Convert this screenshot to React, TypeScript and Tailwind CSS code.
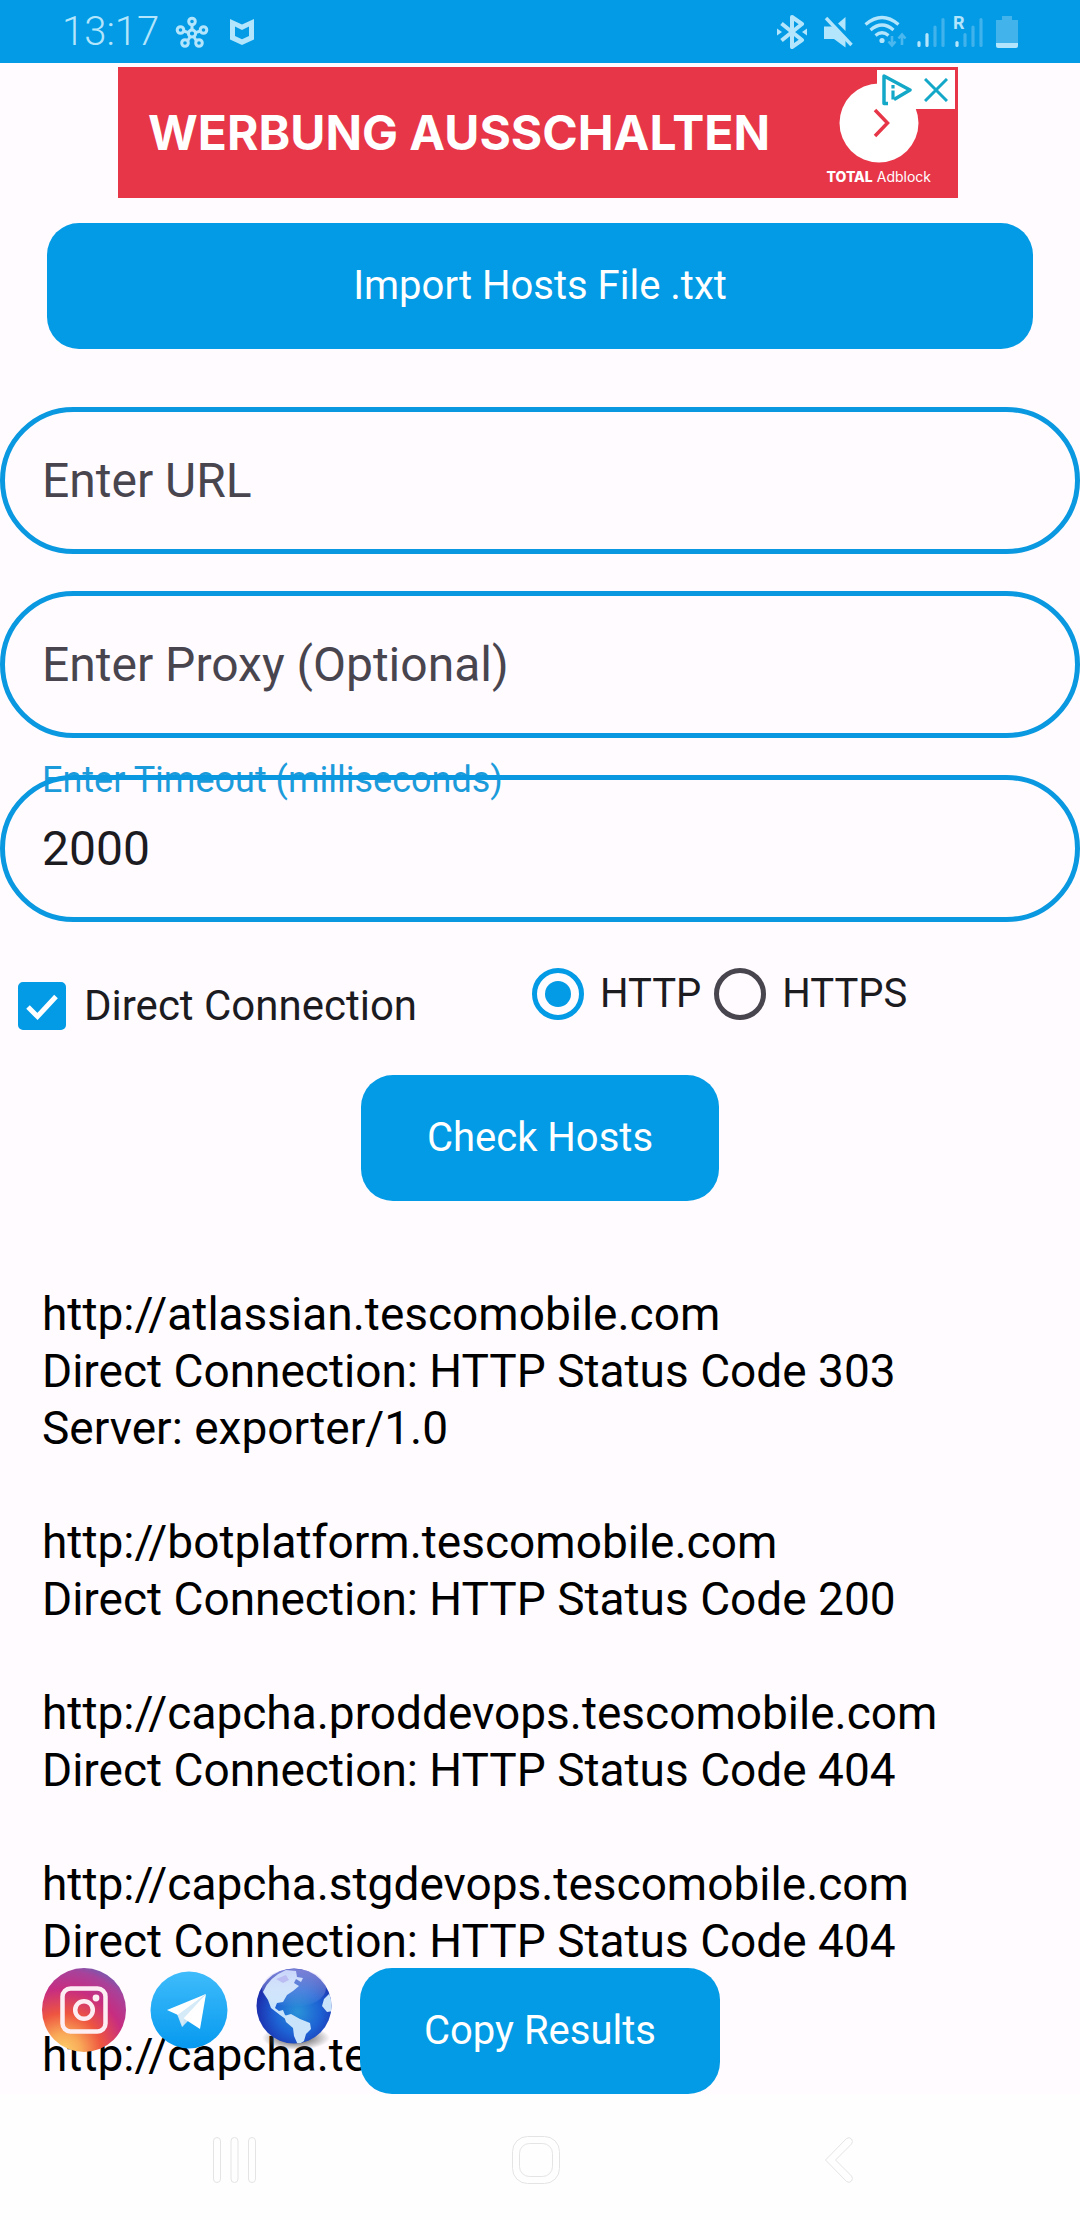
import { useState } from "react";

const RESULTS = [
  { url: "http://atlassian.tescomobile.com", status: 303, server: "exporter/1.0" },
  { url: "http://botplatform.tescomobile.com", status: 200 },
  { url: "http://capcha.proddevops.tescomobile.com", status: 404 },
  { url: "http://capcha.stgdevops.tescomobile.com", status: 404 },
];

const FIELD = "block w-full h-[147px] rounded-full border-5 border-[#0a99e0] bg-transparent px-[37px] text-[48px] text-[#1c1b1f] outline-none placeholder:text-[#49454f] placeholder:opacity-100";
const BUTTON = "h-[126px] rounded-[32px] bg-[#039be5] text-[40px] text-white";

function StatusBar() {
  return (
    <header className="flex h-[63px] items-center bg-[#039be5] pl-[62px] pr-[62px] text-[#b3e5fc]">
      <span className="text-[40px] font-light leading-none">13:17</span>
      <svg className="ml-[16px]" width="34" height="34" viewBox="0 0 34 34" fill="none" stroke="currentColor" strokeWidth="3">
        <path d="M17 10v4M8.500 16l5 1.600M25.500 16l-5 1.600M12.500 26l2.500-4M21.500 26l-2.500-4" />
        <circle cx="17" cy="18.500" r="3.600" />
        <circle cx="17" cy="6.500" r="3.300" />
        <circle cx="5.500" cy="15" r="3.300" />
        <circle cx="28.500" cy="15" r="3.300" />
        <circle cx="10" cy="28" r="3.300" />
        <circle cx="24" cy="28" r="3.300" />
      </svg>
      <svg className="ml-[21px]" width="24" height="28" viewBox="0 0 24 28" fill="currentColor">
        <path fillRule="evenodd" d="M0 1l12 5.500L24 1v20.500L12 27 0 21.500zM5 8.500v9.500l7 3.300 7-3.300V8.500l-7 3.500z" />
      </svg>
      <div className="ml-auto flex items-center">
        <svg width="30" height="34" viewBox="0 0 30 34" fill="none" stroke="currentColor" strokeWidth="4">
          <path d="M4.500 8.500L25 25l-10 7V2l10 7L4.500 25.500" strokeLinejoin="round" />
          <path d="M0 13.500l5 3.500-5 3.500zM30 13.500L25 17l5 3.500z" fill="currentColor" stroke="none" />
        </svg>
        <svg className="ml-[17px]" width="30" height="34" viewBox="0 0 30 34" fill="currentColor">
          <path d="M21.500 2v14L14 8.500z" />
          <path d="M2 3l25.500 27" stroke="#039be5" strokeWidth="7" />
          <path d="M0 11.500h9l12.500 12v9L10 24H0z" />
          <path d="M2 3l25.500 27" stroke="currentColor" strokeWidth="3.400" />
        </svg>
        <svg className="ml-[10px]" width="44" height="34" viewBox="0 0 44 34" fill="none" stroke="currentColor" strokeWidth="3.200">
          <path d="M1.500 9.500q16.500-14 33 0M6.500 15q11.500-10 23 0M11.500 20.500q6.500-5.500 13 0" />
          <circle cx="18" cy="25.500" r="2.600" fill="currentColor" stroke="none" />
          <path d="M28 21v9M24.500 26.500L28 30.500l3.500-4M38 30v-9M34.500 23.500L38 19.500l3.500 4" stroke="#4ab8ee" strokeWidth="2.600" />
        </svg>
        <svg className="ml-[9px]" width="28" height="34" viewBox="0 0 28 34" strokeLinecap="round" strokeWidth="3.200" fill="none">
          <path d="M2 27.500v3M10 19.500v11" stroke="currentColor" />
          <path d="M18 12v18.500M26 4.500v26" stroke="#40b3ec" />
        </svg>
        <svg className="ml-[7px] overflow-visible" width="32" height="34" viewBox="0 0 32 34" strokeLinecap="round" strokeWidth="3.200" fill="none">
          <text x="1" y="14" fontSize="18" fontWeight="700" fill="currentColor">R</text>
          <path d="M5 27.500v3" stroke="currentColor" />
          <path d="M13 19.500v11M21 12v18.500M29 4.500v26" stroke="#40b3ec" />
        </svg>
        <svg className="ml-[12px]" width="22" height="34" viewBox="0 0 22 34">
          <path d="M6 1h10v4h6v24H0V5h6z" fill="#42b3eb" />
          <path d="M0 28h22v3q0 2-2 2H2q-2 0-2-2z" fill="currentColor" />
        </svg>
      </div>
    </header>
  );
}

function AdBanner() {
  return (
    <a href="#ad" className="relative ml-[118px] mr-[122px] mt-1 flex h-[131px] items-center justify-between bg-[#e73648] pl-[30px] pr-[27px] font-['Inter',sans-serif] text-white">
      <span className="text-[48px] font-bold">WERBUNG AUSSCHALTEN</span>
      <span className="flex flex-col items-center pt-[4px]">
        <svg width="80" height="80" viewBox="0 0 80 80">
          <circle cx="40" cy="40" r="39.500" fill="#fff" />
          <path d="M36 27l12.500 13L36 53" fill="none" stroke="#e73648" strokeWidth="3.500" />
        </svg>
        <span className="mt-[4px] text-[14px] leading-[20px]"><b className="font-extrabold">TOTAL</b> Adblock</span>
      </span>
      <span className="absolute right-[3px] top-[3px] flex h-[39px] w-[78px] items-center justify-between bg-white pl-[5px] pr-[7px]">
        <svg width="30" height="32" viewBox="0 0 30 32" fill="none" stroke="#14a8c8" strokeWidth="3.500" strokeLinejoin="round">
          <path d="M6 29.500H2V2l26 14-16 9.500" />
          <path d="M11 16.500v9M11 11v3.500" strokeWidth="3.200" />
        </svg>
        <svg width="24" height="24" viewBox="0 0 24 24" stroke="#14a8c8" strokeWidth="3">
          <path d="M1 1l22 22M23 1L1 23" />
        </svg>
      </span>
    </a>
  );
}

function InstagramIcon() {
  return (
    <svg width="84" height="84" viewBox="0 0 84 84" fill="none">
      <defs>
        <radialGradient id="ig" cx="0.25" cy="1" r="1.1">
          <stop offset="0" stopColor="#fdd36b" />
          <stop offset="0.2" stopColor="#f9a858" />
          <stop offset="0.42" stopColor="#ee5540" />
          <stop offset="0.68" stopColor="#c72d80" />
          <stop offset="0.88" stopColor="#a8429a" />
          <stop offset="1" stopColor="#6c5fb5" />
        </radialGradient>
      </defs>
      <circle cx="42" cy="42" r="42" fill="url(#ig)" />
      <rect x="20.500" y="20.500" width="43" height="43" rx="8" stroke="#fdeef3" strokeWidth="4.500" />
      <circle cx="42" cy="42" r="8.800" stroke="#fdeef3" strokeWidth="4.500" />
      <circle cx="54" cy="30" r="3.400" fill="#fdeef3" />
    </svg>
  );
}

function TelegramIcon() {
  return (
    <svg width="78" height="84" viewBox="0 0 78 84">
      <defs>
        <linearGradient id="tg" x1="0" y1="0" x2="0" y2="1">
          <stop offset="0" stopColor="#3fbcfb" />
          <stop offset="1" stopColor="#0699ef" />
        </linearGradient>
      </defs>
      <circle cx="39" cy="42" r="38.500" fill="url(#tg)" />
      <path d="M27 46l5 13 7-7 16-26z" fill="#c6e3f5" />
      <path d="M56 26L17 42l11 5z" fill="#fff" />
      <path d="M56 26L33 50l17 11z" fill="#fff" />
      <path d="M56 26L28 47l5 12 1-9z" fill="#d5ebf8" />
    </svg>
  );
}

function GlobeIcon() {
  return (
    <svg width="84" height="84" viewBox="0 0 84 84">
      <defs>
        <radialGradient id="globe" cx="0.55" cy="0.58" r="0.55">
          <stop offset="0" stopColor="#2a93d8" />
          <stop offset="0.55" stopColor="#1d62d4" />
          <stop offset="1" stopColor="#1c2fae" />
        </radialGradient>
        <linearGradient id="gloss" x1="0" y1="0" x2="0" y2="1">
          <stop offset="0" stopColor="#c9c6fa" stopOpacity="0.55" />
          <stop offset="1" stopColor="#fff" stopOpacity="0" />
        </linearGradient>
        <radialGradient id="shade">
          <stop offset="0.4" stopColor="#555" stopOpacity="0.7" />
          <stop offset="1" stopColor="#555" stopOpacity="0" />
        </radialGradient>
        <clipPath id="disc"><circle cx="42" cy="38" r="37.500" /></clipPath>
      </defs>
      <ellipse cx="44" cy="70" rx="34" ry="12" fill="url(#shade)" />
      <circle cx="42" cy="38" r="37.500" fill="url(#globe)" />
      <g clipPath="url(#disc)" fill="#c9e3fa">
        <path d="M11 24q6-15 23-22l10 1 1 6 6 1-2 4-5-3-2 4 5 3-6 5-6 4-4 7-6 1-2 5 4 3 4-1 2 5 5 4-3 1-7-5-9-7-3-8z" />
        <path d="M32 48l7-2 9 5 10 4 1 6-5 5-2 7-6 4-4-9-1-8-7-6z" />
        <path d="M80 23l-8 8-2 7 5 6 6-1z" />
        <path d="M24 11l10-4 3 5-6 3z" fill="#a9adec" />
      </g>
      <ellipse cx="42" cy="20" rx="32" ry="19" fill="url(#gloss)" />
    </svg>
  );
}

function NavBar() {
  return (
    <nav className="flex h-[126px] items-center justify-between bg-[#fefefe] pl-[210px] pr-[219px] pt-[6px]">
      <button aria-label="Recent apps">
        <svg width="48" height="48" viewBox="0 0 48 48" fill="none" stroke="#e4e4e4">
          <rect x="3.500" y="1.500" width="7" height="45" rx="3.500" />
          <rect x="21" y="1.500" width="7" height="45" rx="3.500" />
          <rect x="38.500" y="1.500" width="7" height="45" rx="3.500" />
        </svg>
      </button>
      <button aria-label="Home">
        <svg width="48" height="48" viewBox="0 0 48 48" fill="none" stroke="#e4e4e4">
          <rect x="0.500" y="0.500" width="47" height="47" rx="15" />
          <rect x="7.500" y="7.500" width="33" height="33" rx="10" />
        </svg>
      </button>
      <button aria-label="Back">
        <svg width="48" height="48" viewBox="0 0 48 48" fill="none" stroke="#e4e4e4">
          <path d="M33.500 2.500q3-2 5 .500t0 5L22.500 24l16 16q2 2.500 0 5t-5 .500L12.500 24z" />
        </svg>
      </button>
    </nav>
  );
}

export default function App() {
  const [url, setUrl] = useState("");
  const [proxy, setProxy] = useState("");
  const [timeout, setTimeoutMs] = useState("2000");
  const [direct, setDirect] = useState(true);
  const [scheme, setScheme] = useState("HTTP");

  return (
    <div className="flex min-h-screen flex-col bg-[#fffbff] font-['Roboto',sans-serif]">
      <StatusBar />
      <main className="relative flex flex-1 flex-col overflow-hidden">
        <AdBanner />
        <button className={`${BUTTON} mx-[47px] mt-[25px]`}>Import Hosts File .txt</button>

        <form className="mt-[58px] flex flex-col" onSubmit={(e) => e.preventDefault()}>
          <div className="flex flex-col gap-[37px]">
            <input aria-label="Enter URL" placeholder="Enter URL" className={FIELD} value={url} onChange={(e) => setUrl(e.target.value)} />
            <input aria-label="Enter Proxy (Optional)" placeholder="Enter Proxy (Optional)" className={FIELD} value={proxy} onChange={(e) => setProxy(e.target.value)} />
            <div className="relative">
              <label htmlFor="timeout" className="absolute -top-[15px] left-[42px] text-[36px] leading-[40px] text-[#1c9bdb]">Enter Timeout (milliseconds)</label>
              <input id="timeout" className={`${FIELD} relative`} value={timeout} onChange={(e) => setTimeoutMs(e.target.value)} />
            </div>
          </div>

          <div className="mt-[46px] flex items-start pl-[18px] text-[40px] leading-[48px] text-[#1c1b1f]">
            <label className="mt-[14px] flex w-[514px] items-center gap-[18px] text-[42px]">
              <span className="relative size-[48px]">
                <input type="checkbox" checked={direct} onChange={(e) => setDirect(e.target.checked)} className="block size-[48px] appearance-none rounded-[5px] border-4 border-[#49454f] checked:border-[#039be5] checked:bg-[#039be5]" />
                {direct && (
                  <svg className="pointer-events-none absolute inset-0" width="48" height="48" viewBox="0 0 48 48" fill="none" stroke="#fff" strokeWidth="5">
                    <path d="M10 25l9.500 9.500L38 14.500" />
                  </svg>
                )}
              </span>
              Direct Connection
            </label>
            {["HTTP", "HTTPS"].map((s) => (
              <label key={s} className="mr-[13px] flex items-center gap-[16px]">
                <span className="relative flex size-[52px] items-center justify-center">
                  <input type="radio" name="scheme" checked={scheme === s} onChange={() => setScheme(s)} className="size-[52px] appearance-none rounded-full border-5 border-[#49454f] checked:border-[#039be5]" />
                  {scheme === s && <span className="pointer-events-none absolute size-[26px] rounded-full bg-[#039be5]" />}
                </span>
                {s}
              </label>
            ))}
          </div>

          <button type="submit" className={`${BUTTON} mt-[45px] w-[358px] self-center`}>Check Hosts</button>
        </form>

        <section className="mt-[85px] px-[42px] pb-[10px] text-[46px] leading-[57px] text-black">
          {RESULTS.map((r) => (
            <div key={r.url} className="mb-[57px]">
              <p>{r.url}</p>
              <p>Direct Connection: HTTP Status Code {r.status}</p>
              {r.server && <p>Server: {r.server}</p>}
            </div>
          ))}
          <p>http://capcha.te</p>
        </section>

        {/* floating footer over the results */}
        <div className="absolute inset-x-0 bottom-0 grid grid-cols-[1fr_auto_1fr] items-start">
          <div className="flex gap-[24px] pl-[42px]">
            <a href="#instagram" aria-label="Instagram"><InstagramIcon /></a>
            <a href="#telegram" aria-label="Telegram"><TelegramIcon /></a>
            <a href="#website" aria-label="Website"><GlobeIcon /></a>
          </div>
          <button className={`${BUTTON} w-[360px]`}>Copy Results</button>
        </div>
      </main>
      <NavBar />
    </div>
  );
}
